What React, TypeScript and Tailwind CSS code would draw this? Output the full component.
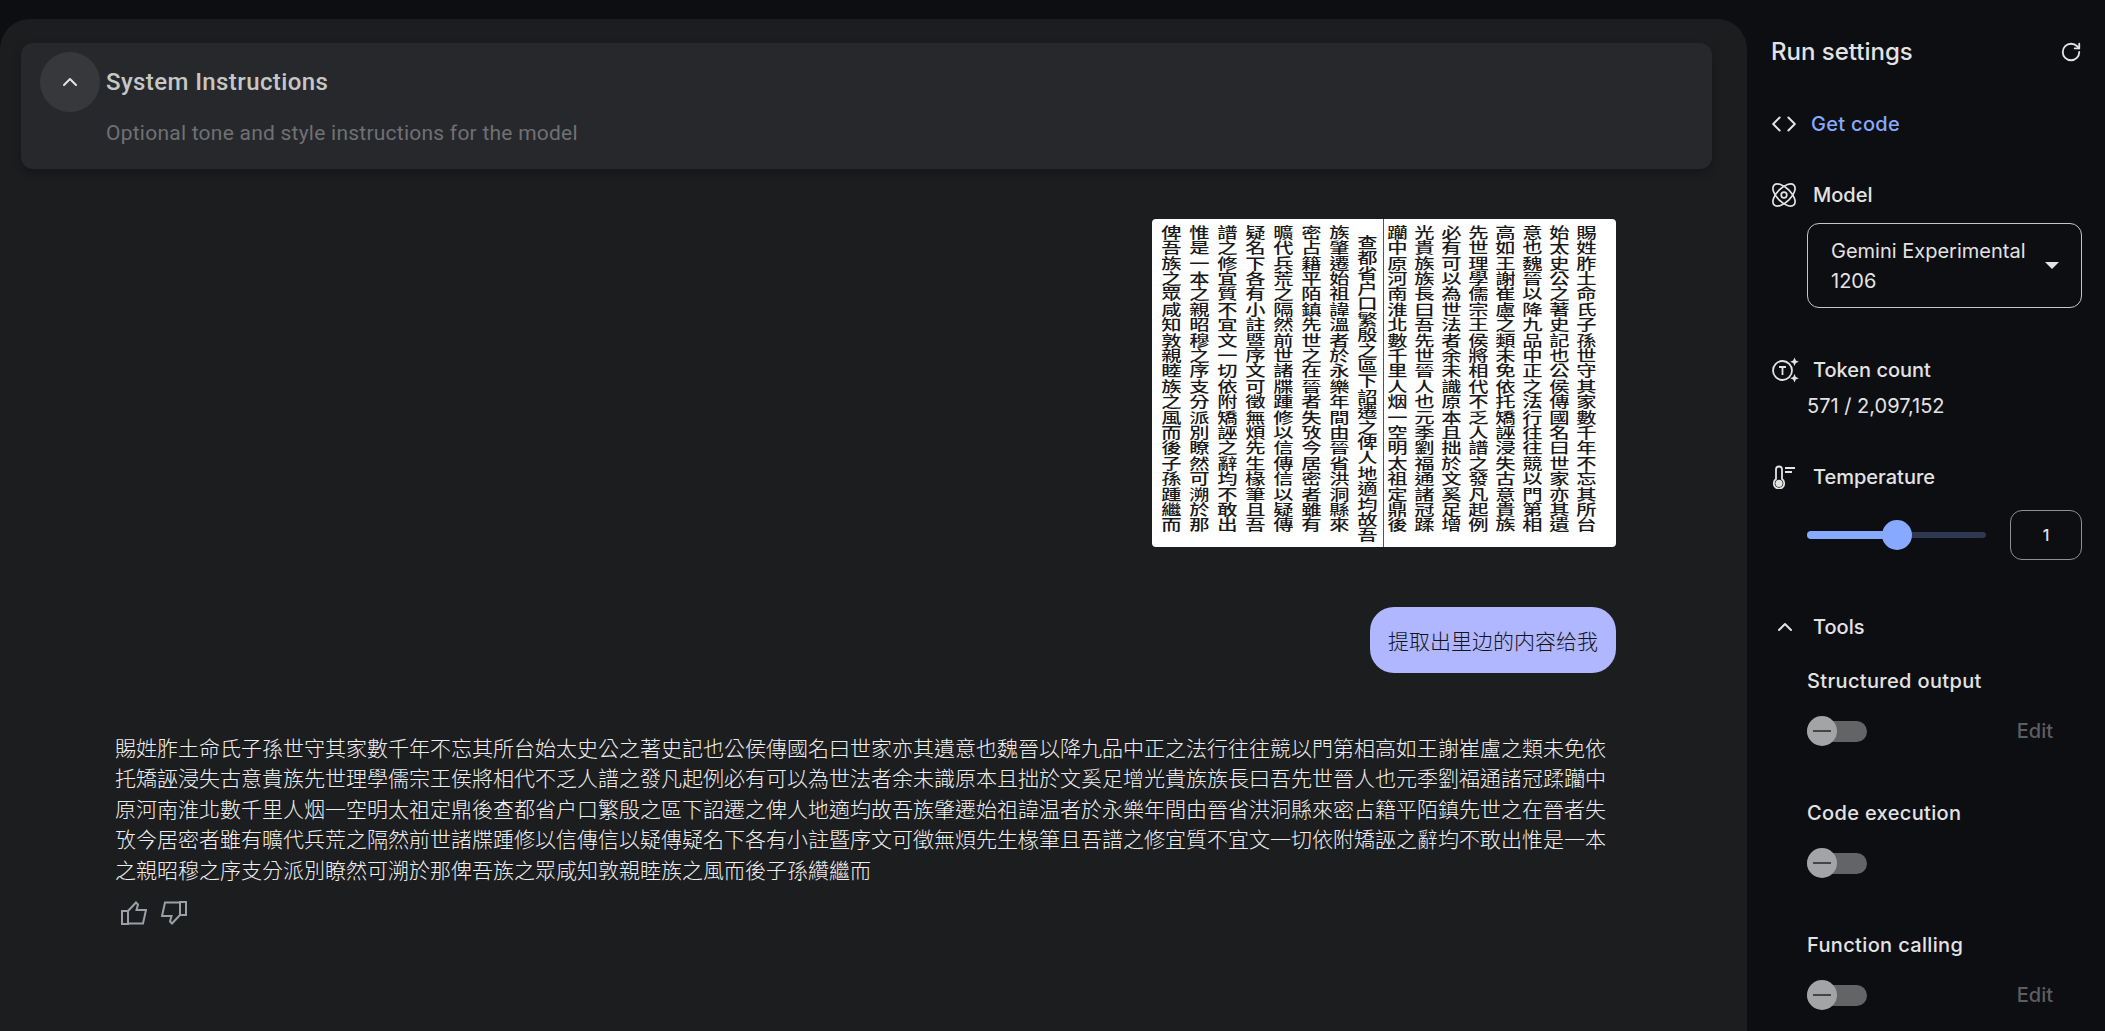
import { ChevronUp, Code, RotateCw } from 'lucide-react';

const PAGE_COLUMNS = [
  '賜姓胙土命氏子孫世守其家數千年不忘其所台',
  '始太史公之著史記也公侯傳國名曰世家亦其遺',
  '意也魏晉以降九品中正之法行往往競以門第相',
  '高如王謝崔盧之類未免依托矯誣浸失古意貴族',
  '先世理學儒宗王侯將相代不乏人譜之發凡起例',
  '必有可以為世法者余未識原本且拙於文奚足增',
  '光貴族族長曰吾先世晉人也元季劉福通諸冠蹂',
  '躪中原河南淮北數千里人烟一空明太祖定鼎後',
];

const PAGE_COLUMNS_LEFT = [
  '查都省户口繁殷之區下詔遷之俾人地適均故吾',
  '族肇遷始祖諱溫者於永樂年間由晉省洪洞縣來',
  '密占籍平陌鎮先世之在晉者失攷今居密者雖有',
  '曠代兵荒之隔然前世諸牒踵修以信傳信以疑傳',
  '疑名下各有小註暨序文可徵無煩先生椽筆且吾',
  '譜之修宜質不宜文一切依附矯誣之辭均不敢出',
  '惟是一本之親昭穆之序支分派別瞭然可溯於那',
  '俾吾族之眾咸知敦親睦族之風而後子孫踵繼而',
];

const RESPONSE =
  '賜姓胙土命氏子孫世守其家數千年不忘其所台始太史公之著史記也公侯傳國名曰世家亦其遺意也魏晉以降九品中正之法行往往競以門第相高如王謝崔盧之類未免依托矯誣浸失古意貴族先世理學儒宗王侯將相代不乏人譜之發凡起例必有可以為世法者余未識原本且拙於文奚足增光貴族族長曰吾先世晉人也元季劉福通諸冠蹂躪中原河南淮北數千里人烟一空明太祖定鼎後查都省户口繁殷之區下詔遷之俾人地適均故吾族肇遷始祖諱温者於永樂年間由晉省洪洞縣來密占籍平陌鎮先世之在晉者失攷今居密者雖有曠代兵荒之隔然前世諸牒踵修以信傳信以疑傳疑名下各有小註暨序文可徵無煩先生椽筆且吾譜之修宜質不宜文一切依附矯誣之辭均不敢出惟是一本之親昭穆之序支分派別瞭然可溯於那俾吾族之眾咸知敦親睦族之風而後子孫纘繼而';

function PageColumn({ text }: { text: string }) {
  return (
    <div className="w-[27px] scale-x-[1.4] text-[14.5px] leading-[27px] tracking-[0.9px] font-medium text-[#1a1a1a] [writing-mode:vertical-rl] whitespace-nowrap">
      {text}
    </div>
  );
}

function ScanImage() {
  return (
    <div className="flex h-[328px] w-[464px] flex-row-reverse overflow-hidden rounded-[4px] bg-white pt-[6px] pr-[16px] font-['Noto_Sans_CJK_TC',sans-serif]">
      <div className="flex flex-row-reverse">
        {PAGE_COLUMNS.map((c) => (
          <PageColumn key={c} text={c} />
        ))}
      </div>
      <div className="-mt-[6px] w-[1px] bg-[#555]" />
      <div className="flex flex-row-reverse gap-[1px] pr-[2px]">
        {PAGE_COLUMNS_LEFT.map((c, i) => (
          <div key={c} className={i === 0 ? 'pt-[10px]' : ''}>
            <PageColumn text={c} />
          </div>
        ))}
      </div>
    </div>
  );
}

function ModelIcon() {
  return (
    <svg width="24" height="24" viewBox="0 0 24 24" fill="none" stroke="#e3e3e3" strokeWidth="1.7">
      <ellipse cx="12" cy="12" rx="14" ry="7" transform="rotate(45 12 12)" />
      <ellipse cx="12" cy="12" rx="14" ry="7" transform="rotate(-45 12 12)" />
      <circle cx="12" cy="12" r="2.8" />
    </svg>
  );
}

function TokenIcon() {
  return (
    <svg width="28" height="28" viewBox="0 0 28 28" fill="none" stroke="#e3e3e3" strokeWidth="1.8">
      <circle cx="10.5" cy="14.5" r="9.5" />
      <path d="M7 11h7M10.5 11v8" />
      <path d="M22.5 1.5l1.3 3 3 1.3-3 1.3-1.3 3-1.3-3-3-1.3 3-1.3z" fill="#e3e3e3" stroke="none" />
      <path d="M22.5 18l1.3 3 3 1.3-3 1.3-1.3 3-1.3-3-3-1.3 3-1.3z" fill="#e3e3e3" stroke="none" />
    </svg>
  );
}

function TempIcon() {
  return (
    <svg width="24" height="24" viewBox="0 0 24 24" fill="none" stroke="#e3e3e3" strokeWidth="1.8">
      <path d="M4 4.5a3 3 0 0 1 6 0v9.6a5.2 5.2 0 1 1-6 0z" />
      <circle cx="7" cy="18.3" r="3.6" fill="#e3e3e3" stroke="none" />
      <path d="M13 3h10M13 7h7" />
    </svg>
  );
}

function ThumbIcon({ className }: { className?: string }) {
  return (
    <svg width="26" height="24" viewBox="0 0 26 24" fill="none" stroke="#9a9fa8" strokeWidth="2" className={className}>
      <path d="M1 10h6v13H1z" />
      <path d="M7 10l8-8.500 2 2-1.500 5.500H25l-3 13.500H7" />
    </svg>
  );
}

function Toggle() {
  return (
    <div className="flex h-[30px] w-[60px] items-center">
      <div className="relative h-[21px] w-[60px] rounded-full bg-[#636466]">
        <div className="absolute top-[-4.5px] left-0 flex h-[30px] w-[30px] items-center justify-center rounded-full bg-[#a3a4a6]">
          <div className="h-[2px] w-[18px] bg-[#444548]" />
        </div>
      </div>
    </div>
  );
}

function ToolRow({ label, edit }: { label: string; edit?: boolean }) {
  return (
    <div className="pl-[36px]">
      <div className="text-[20px] leading-[30px] tracking-[0.35px] font-medium text-[#e3e3e3]">{label}</div>
      <div className="mt-[20px] flex items-center justify-between pr-[52px]">
        <Toggle />
        {edit && <span className="text-[20px] leading-[30px] font-medium text-[#5c5e61]">Edit</span>}
      </div>
    </div>
  );
}

function SectionLabel({ icon, label }: { icon: React.ReactNode; label: string }) {
  return (
    <div className="flex h-[30px] items-center">
      <div className="flex w-[42px] shrink-0 items-center pl-[1px]">{icon}</div>
      <span className="text-[20px] leading-[30px] font-medium text-[#e3e3e3]">{label}</span>
    </div>
  );
}

function RunSettings() {
  return (
    <aside className="flex h-full w-[358px] shrink-0 flex-col overflow-hidden pt-[34px] pl-[24px] font-['Inter',sans-serif] text-[#e3e3e3]">
      <div className="flex h-[36px] items-center justify-between pr-[23px]">
        <h2 className="text-[24px] font-medium">Run settings</h2>
        <RotateCw className="h-[22px] w-[22px] text-[#e3e3e3]" strokeWidth={2} />
      </div>

      <div className="mt-[39px] flex h-[30px] items-center">
        <div className="w-[40px] shrink-0">
          <Code className="h-[26px] w-[26px] text-[#e3e3e3]" strokeWidth={1.8} />
        </div>
        <span className="text-[20px] tracking-[0.3px] font-medium text-[#87a9ff]">Get code</span>
      </div>

      <div className="mt-[41px]">
        <SectionLabel icon={<ModelIcon />} label="Model" />
        <div className="mt-[13px] ml-[36px] flex h-[85px] w-[275px] items-center justify-between rounded-[12px] border border-[#c4c7c5] pr-[22px] pl-[23px] text-[20px] leading-[30px] text-[#e3e3e3]">
          <span className="w-[205px]">Gemini Experimental 1206</span>
          <span className="h-0 w-0 border-x-[7.5px] border-t-[7.5px] border-x-transparent border-t-[#e3e3e3]" />
        </div>
      </div>

      <div className="mt-[47px]">
        <SectionLabel icon={<TokenIcon />} label="Token count" />
        <div className="mt-[6px] ml-[36px] text-[20px] leading-[30px] text-[#e3e3e3]">571 / 2,097,152</div>
      </div>

      <div className="mt-[41px]">
        <SectionLabel icon={<TempIcon />} label="Temperature" />
        <div className="mt-[18px] ml-[36px] flex items-center">
          <div className="relative h-[6px] w-[179px] rounded-full bg-[#2f3850]">
            <div className="h-[8px] w-[89px] -translate-y-[1px] rounded-full bg-[#87a9ff]" />
            <div className="absolute top-[-12px] left-[75px] h-[30px] w-[30px] rounded-full bg-[#87a9ff]" />
          </div>
          <div className="ml-[24px] flex h-[50px] w-[72px] items-center justify-center rounded-[12px] border border-[#8e918f] text-[16px] font-medium text-[#e3e3e3]">
            1
          </div>
        </div>
      </div>

      <div className="mt-[52px] flex h-[30px] items-center">
        <div className="w-[42px] shrink-0 pl-[2px]">
          <ChevronUp className="h-[24px] w-[24px] text-[#e3e3e3]" strokeWidth={2} />
        </div>
        <span className="text-[20px] font-medium text-[#e3e3e3]">Tools</span>
      </div>

      <div className="mt-[24px] flex flex-col gap-[52px]">
        <ToolRow label="Structured output" edit />
        <ToolRow label="Code execution" />
        <ToolRow label="Function calling" edit />
      </div>
    </aside>
  );
}

function SystemInstructions() {
  return (
    <div className="mt-[24px] mr-[35px] ml-[21px] flex h-[126px] rounded-[12px] bg-[#27282c] pt-[9px] pl-[19px] font-['Roboto',sans-serif] shadow-[0_4px_8px_rgba(0,0,0,0.25)]">
      <div className="flex h-[60px] w-[60px] items-center justify-center rounded-full bg-[#37383c]">
        <ChevronUp className="h-[24px] w-[24px] text-[#e3e3e3]" strokeWidth={2} />
      </div>
      <div className="ml-[6px]">
        <div className="flex h-[60px] items-center text-[24px] tracking-[0.4px] font-medium text-[#c4c7c5]">System Instructions</div>
        <div className="mt-[6px] text-[21px] leading-[30px] tracking-[0.24px] text-[#6f7174]">Optional tone and style instructions for the model</div>
      </div>
    </div>
  );
}

function ChatPanel() {
  return (
    <main className="flex h-full min-w-0 flex-1 flex-col overflow-hidden rounded-t-[30px] bg-[#1c1d1f]">
      <SystemInstructions />

      <div className="flex flex-col items-end pt-[50px] pr-[131px]">
        <ScanImage />
        <div className="mt-[60px] rounded-[24px] bg-[#b0b7ff] px-[18px] py-[18px] font-['Noto_Sans_CJK_SC',sans-serif] text-[21px] leading-[30px] font-light text-[#14141c]">
          提取出里边的内容给我
        </div>
      </div>

      <div className="mt-[59px] ml-[115px] w-[1496px] self-start font-['Noto_Sans_CJK_TC',sans-serif] text-[21px] leading-[30.4px] font-light text-[#eeeeee]">
        {RESPONSE}
      </div>

      <div className="mt-[17px] ml-[121px] flex gap-[14px]">
        <ThumbIcon />
        <ThumbIcon className="rotate-180" />
      </div>
    </main>
  );
}

export default function App() {
  return (
    <div className="flex h-[1031px] w-[2105px] overflow-hidden bg-[#0d0e12] pt-[19px]">
      <ChatPanel />
      <div className="-mt-[19px] h-[1031px]">
        <RunSettings />
      </div>
    </div>
  );
}
